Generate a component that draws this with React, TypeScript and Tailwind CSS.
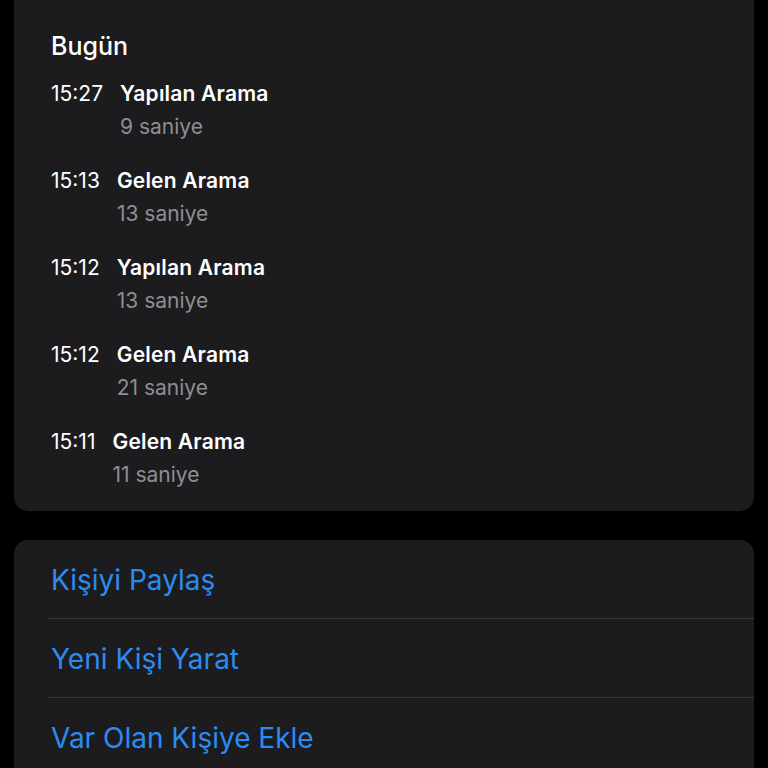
import React from "react";

const calls = [
  { time: "15:27", title: "Yapılan Arama", dur: "9 saniye" },
  { time: "15:13", title: "Gelen Arama", dur: "13 saniye" },
  { time: "15:12", title: "Yapılan Arama", dur: "13 saniye" },
  { time: "15:12", title: "Gelen Arama", dur: "21 saniye" },
  { time: "15:11", title: "Gelen Arama", dur: "11 saniye" },
];

const actions = ["Kişiyi Paylaş", "Yeni Kişi Yarat", "Var Olan Kişiye Ekle"];

export default function App() {
  return (
    <div
      className="w-[768px] h-[768px] bg-black overflow-hidden"
      style={{ fontFamily: "Inter, 'Noto Sans', sans-serif" }}
    >
      <div className="ml-[14px] w-[740px] bg-[#1c1c1e] rounded-b-[14px] pl-[37px] pt-[30px] pb-[20px]">
        <div className="text-[25px] leading-[32px] text-white font-medium">Bugün</div>
        <div className="mt-[15px] flex flex-col gap-[21px]">
          {calls.map((c, i) => (
            <div key={i} className="flex gap-[17px]">
              <div className="text-[21px] leading-[33px] text-white">{c.time}</div>
              <div className="flex flex-col">
                <div className="text-[21px] leading-[33px] text-white font-semibold tracking-[0.2px]">{c.title}</div>
                <div className="text-[21px] leading-[33px] text-[#8e8e93]">{c.dur}</div>
              </div>
            </div>
          ))}
        </div>
      </div>
      <div className="ml-[14px] mt-[29px] w-[740px] bg-[#1c1c1e] rounded-t-[14px] pl-[34px]">
        {actions.map((a, i) => (
          <div
            key={i}
            className={`h-[79px] flex items-center pl-[3px] pt-[1px] text-[28px] text-[#2a8cf2] ${
              i < actions.length - 1 ? "border-b border-[#38383a]" : ""
            }`}
          >
            {a}
          </div>
        ))}
      </div>
    </div>
  );
}
